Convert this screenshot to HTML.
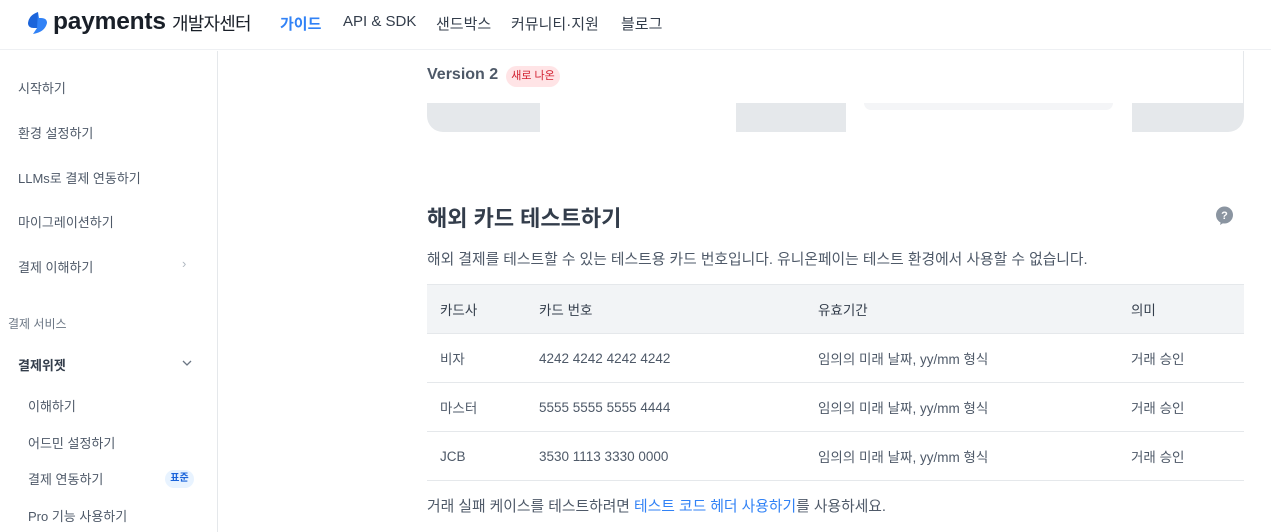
<!DOCTYPE html>
<html><head><meta charset="utf-8"><style>
*{margin:0;padding:0;box-sizing:border-box}
body{width:1271px;height:532px;overflow:hidden;background:#fff;font-family:"Liberation Sans","Noto Sans CJK KR",sans-serif;color:#333d4b;position:relative}
.a{position:absolute;white-space:nowrap}
.hdr{position:absolute;left:0;top:0;width:1271px;height:50px;border-bottom:1px solid #eef0f3}
.nav{font-size:15px;color:#333d4b;top:13px}
.side{position:absolute;left:0;top:51px;width:218px;height:481px;border-right:1px solid #e5e8eb}
.si{font-size:13px;color:#4e5968}
td,th{font-size:13.5px;text-align:left;font-weight:normal;color:#4e5968;padding-left:13px;height:49px;border-bottom:1px solid #e5e8eb}
th{background:#f2f4f6;color:#333d4b}
</style></head><body>
<div class="hdr"></div>
<svg class="a" style="left:25px;top:10px" width="26" height="26" viewBox="0 0 26 26"><path d="M13 2 L7 12 Q4 17 9 18 L12 18 L8 24 Q20 22 22 13 Q22 8 16 8 L14 8 Z" fill="#3182f6"/><path d="M13 2 Q4 5 3 13 Q3 18 9 18 L12 18 Z" fill="#1b64da"/></svg>
<div class="a" style="left:53px;top:8px;font-size:24.5px;font-weight:bold;color:#191f28;letter-spacing:-0.2px">payments</div>
<div class="a" style="left:172px;top:10px;font-size:18px;color:#191f28;letter-spacing:-0.8px">개발자센터</div>
<div class="a nav" style="left:280px;color:#3182f6;font-weight:bold">가이드</div>
<div class="a nav" style="left:343px">API &amp; SDK</div>
<div class="a nav" style="left:436px">샌드박스</div>
<div class="a nav" style="left:511px">커뮤니티·지원</div>
<div class="a nav" style="left:621px">블로그</div>

<div class="side"></div>
<div class="a si" style="left:18px;top:78px">시작하기</div>
<div class="a si" style="left:18px;top:123px">환경 설정하기</div>
<div class="a si" style="left:18px;top:168px">LLMs로 결제 연동하기</div>
<div class="a si" style="left:18px;top:212px">마이그레이션하기</div>
<div class="a si" style="left:18px;top:257px">결제 이해하기</div>
<div class="a si" style="left:182px;top:256px;color:#b0b8c1">›</div>
<div class="a si" style="left:8px;top:315px;color:#6b7684;font-size:12px">결제 서비스</div>
<div class="a si" style="left:18px;top:355px;font-weight:bold;color:#333d4b">결제위젯</div>
<svg class="a" style="left:182px;top:359px" width="10" height="8"><path d="M1 2 L5 6 L9 2" stroke="#6b7684" fill="none" stroke-width="1.3"/></svg>
<div class="a si" style="left:28px;top:396px">이해하기</div>
<div class="a si" style="left:28px;top:433px">어드민 설정하기</div>
<div class="a si" style="left:28px;top:469px">결제 연동하기</div>
<div class="a" style="left:165px;top:470px;width:29px;height:18px;border-radius:9px;background:#e8f3ff;color:#1b64da;font-size:10px;font-weight:bold;text-align:center;line-height:18px">표준</div>
<div class="a si" style="left:28px;top:506px">Pro 기능 사용하기</div>

<div class="a" style="left:1243px;top:51px;width:1px;height:55px;background:#e5e8eb"></div>
<div class="a" style="left:427px;top:66px;font-size:16px;font-weight:bold;color:#4e5968">Version 2</div>
<div class="a" style="left:506px;top:66px;width:54px;height:21px;border-radius:11px;background:#ffe4e6;color:#d22030;font-size:11px;text-align:center;line-height:21px">새로 나온</div>
<div class="a" style="left:427px;top:103px;width:113px;height:29px;background:#e5e8eb;border-bottom-left-radius:16px"></div>
<div class="a" style="left:736px;top:103px;width:110px;height:29px;background:#e5e8eb"></div>
<div class="a" style="left:864px;top:103px;width:249px;height:7px;background:#f4f5f7;border-radius:0 0 8px 8px"></div>
<div class="a" style="left:1132px;top:103px;width:112px;height:29px;background:#e5e8eb;border-bottom-right-radius:16px"></div>

<div class="a" style="left:427px;top:201px;font-size:22px;font-weight:bold;color:#333d4b">해외 카드 테스트하기</div>
<svg class="a" style="left:1215px;top:206px" width="19" height="20"><circle cx="9.5" cy="9" r="8.5" fill="#8b95a1"/><path d="M6 15 L5 19 L10 16Z" fill="#8b95a1"/><text x="9.5" y="13" font-size="11" font-weight="bold" fill="#fff" text-anchor="middle" font-family="Liberation Sans">?</text></svg>
<div class="a" style="left:427px;top:248px;font-size:14.8px;color:#4e5968">해외 결제를 테스트할 수 있는 테스트용 카드 번호입니다. 유니온페이는 테스트 환경에서 사용할 수 없습니다.</div>
<table class="a" style="left:427px;top:284px;width:817px;border-collapse:collapse;border-top:1px solid #e5e8eb">
<tr><th style="width:99px">카드사</th><th style="width:279px">카드 번호</th><th style="width:313px">유효기간</th><th>의미</th></tr>
<tr><td>비자</td><td>4242 4242 4242 4242</td><td>임의의 미래 날짜, yy/mm 형식</td><td>거래 승인</td></tr>
<tr><td>마스터</td><td>5555 5555 5555 4444</td><td>임의의 미래 날짜, yy/mm 형식</td><td>거래 승인</td></tr>
<tr><td>JCB</td><td>3530 1113 3330 0000</td><td>임의의 미래 날짜, yy/mm 형식</td><td>거래 승인</td></tr>
</table>
<div class="a" style="left:427px;top:495px;font-size:14.8px;color:#4e5968">거래 실패 케이스를 테스트하려면 <span style="color:#3182f6">테스트 코드 헤더 사용하기</span>를 사용하세요.</div>
</body></html>
